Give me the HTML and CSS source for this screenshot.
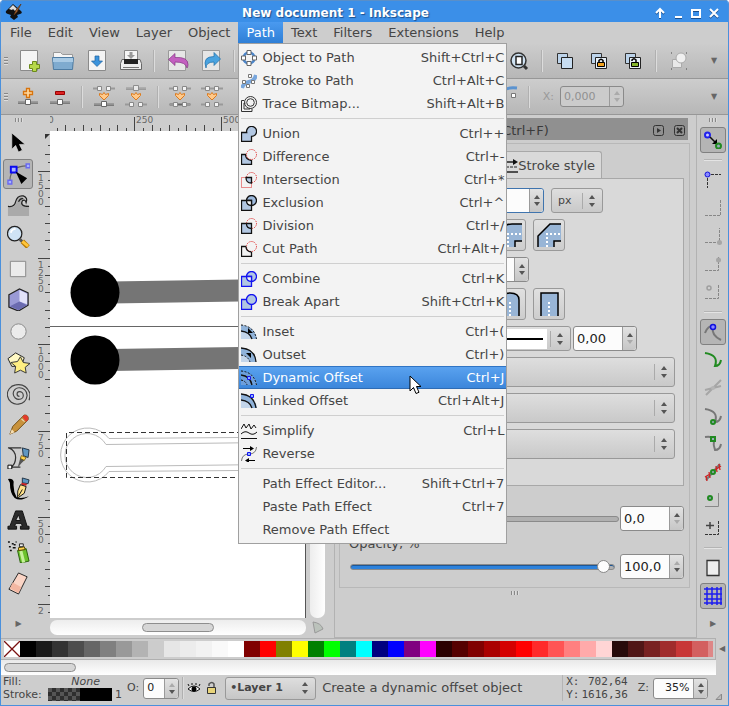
FILE: index.html
```html
<!DOCTYPE html>
<html lang="en">

<head>
    <meta charset="UTF-8">
    <meta name="viewport" content="width=device-width, initial-scale=1">
    <title>New document 1 - Inkscape</title>
    <link rel="stylesheet" href="styles.css">
</head>

<body>
    <div class="window">
        <header class="titlebar">
            <svg class="app-logo" width="18" height="18" viewBox="0 0 18 18">
                <path d="M8 1L1 8q-1 2 2 3l3 1-1 2 4 3 4-3-1-2 3-1q3-1 1-3z" fill="#111" />
                <path d="M8 2L4 6l3 1 1-1 2 2 2-2z" fill="#ddd" />
                <path d="M16 1l-5 6-2 5 3-3z" fill="#a9693a" stroke="#5d300f" stroke-width=".7" />
            </svg>
            <h1 class="title">New document 1 - Inkscape</h1>
            <div class="window-buttons">
                <button class="win-btn" aria-label="Roll up"><svg width="12" height="12" viewBox="0 0 12 12"><path d="M6 11V3M2 6l4-4 4 4" /></svg></button>
                <button class="win-btn" aria-label="Minimize"><svg width="12" height="12" viewBox="0 0 12 12"><path d="M3 10h7" /></svg></button>
                <button class="win-btn" aria-label="Maximize"><svg width="12" height="12" viewBox="0 0 12 12"><path d="M2 3h8v7H2z" /></svg></button>
                <button class="win-btn" aria-label="Close"><svg width="12" height="12" viewBox="0 0 12 12"><path d="M2 2l8 8M10 2l-8 8" /></svg></button>
            </div>
        </header>

        <nav class="menubar">
            <button class="menu-title">File</button>
            <button class="menu-title">Edit</button>
            <button class="menu-title">View</button>
            <button class="menu-title">Layer</button>
            <button class="menu-title">Object</button>
            <div class="menu-open">
                <button class="menu-title active" aria-expanded="true">Path</button>
                <div class="menu">
                    <button class="item">
                        <svg class="icon" viewBox="0 0 16 16"><circle cx="8" cy="8" r="5.5" fill="none" stroke="#4a86cc" stroke-width="2.5" /><g fill="#fff" stroke="#666"><path d="M6 .5h4v4H6zM6 11.500h4v4H6zM.5 6h4v4h-4zM11.500 6h4v4h-4z" /></g></svg>
                        <span>Object to Path</span><kbd>Shift+Ctrl+C</kbd></button>
                    <button class="item">
                        <svg class="icon" viewBox="0 0 16 16"><path d="M1 15C4 5 12 13 15 2" fill="none" stroke="#78a6dc" stroke-width="4" /><g fill="#fff" stroke="#777"><path d="M7.500 1.500h3v3h-3zM1.500 7.500h3v3h-3zM10.500 7.500h3v3h-3zM5.500 11.500h3v3h-3z" /></g></svg>
                        <span>Stroke to Path</span><kbd>Ctrl+Alt+C</kbd></button>
                    <button class="item">
                        <svg class="icon" viewBox="0 0 16 16" fill="none" stroke="#333"><circle cx="9.500" cy="6.500" r="6" /><circle cx="9.500" cy="6.500" r="3.800" /><path d="M3 4.500H.5v11H11v-2.500M4.500 7H3v6h6v-1" /></svg>
                        <span>Trace Bitmap...</span><kbd>Shift+Alt+B</kbd></button>
                    <hr>
                    <button class="item">
                        <svg class="icon" viewBox="0 0 16 16"><path d="M.5 6.500h5.200A5 5 0 1 1 10.500 10.400V15.500H.5z" fill="#b2c7e2" stroke="#111" stroke-width="1.300" /></svg>
                        <span>Union</span><kbd>Ctrl++</kbd></button>
                    <button class="item">
                        <svg class="icon" viewBox="0 0 16 16"><path d="M.5 5.500h4q0 5 6 6v4H.5z" fill="#b2c7e2" stroke="#111" stroke-width="1.300" /><circle cx="10.500" cy="5.500" r="5" class="cut-line" /></svg>
                        <span>Difference</span><kbd>Ctrl+-</kbd></button>
                    <button class="item">
                        <svg class="icon" viewBox="0 0 16 16"><path d="M.5 5.500h10v10H.5z" class="cut-line" /><circle cx="10.500" cy="5.500" r="5" class="cut-line" /><path d="M5 5.500h5.500v5.500Q5 11 5 5.500z" fill="#b2c7e2" stroke="#111" stroke-width="1.300" /></svg>
                        <span>Intersection</span><kbd>Ctrl+*</kbd></button>
                    <button class="item">
                        <svg class="icon" viewBox="0 0 16 16" stroke="#111" stroke-width="1.300"><circle cx="10.500" cy="5.500" r="5" fill="#9db9dc" /><path d="M.5 5.500h10v10H.5z" fill="#b2c7e2" /><path d="M5.500 5.500h5v5q-5 0-5-5z" fill="#f3f3f3" /></svg>
                        <span>Exclusion</span><kbd>Ctrl+^</kbd></button>
                    <button class="item">
                        <svg class="icon" viewBox="0 0 16 16"><circle cx="10.500" cy="5.500" r="5" class="cut-line" /><g fill="#b2c7e2" stroke="#111" stroke-width="1.300"><path d="M.5 5.500h10v10H.5z" /><path d="M5.500 5.500q0 5 5 5" /></g></svg>
                        <span>Division</span><kbd>Ctrl+/</kbd></button>
                    <button class="item">
                        <svg class="icon" viewBox="0 0 16 16"><circle cx="10.500" cy="5.500" r="5" class="cut-line" /><path d="M5 5.500H.5v10h10v-4.500M5 5.500q0 5 5.500 5.500" fill="none" stroke="#111" stroke-width="1.300" /></svg>
                        <span>Cut Path</span><kbd>Ctrl+Alt+/</kbd></button>
                    <hr>
                    <button class="item">
                        <svg class="icon" viewBox="0 0 16 16" stroke="#1414f0" stroke-width="1.300"><circle cx="10.500" cy="5.500" r="5" fill="#b2c7e2" /><path d="M.5 5.500h10v10H.5z" fill="#b2c7e2" /><path d="M5.500 5.500h5v5q-5 0-5-5z" fill="#f3f3f3" /></svg>
                        <span>Combine</span><kbd>Ctrl+K</kbd></button>
                    <button class="item">
                        <svg class="icon" viewBox="0 0 16 16" fill="#b2c7e2" stroke="#1414f0" stroke-width="1.300"><path d="M.5 5.500h10v10H.5z" /><circle cx="10.500" cy="5.500" r="5" /></svg>
                        <span>Break Apart</span><kbd>Shift+Ctrl+K</kbd></button>
                    <hr>
                    <button class="item">
                        <svg class="icon" viewBox="0 0 16 16"><path d="M0 1q14 1 16 14H9Q8 8 0 7z" fill="#8fb2d9" /><path d="M0 7q9 1 11 8H0z" fill="#c3d5ea" /><path d="M0 1q13 1 15.500 14" fill="none" stroke="#111" stroke-dasharray="2 1.500" /><path d="M0 7q9 1 11 8" fill="none" stroke="#111" stroke-width="1.300" /><path d="M7 4v5h5z" /></svg>
                        <span>Inset</span><kbd>Ctrl+(</kbd></button>
                    <button class="item">
                        <svg class="icon" viewBox="0 0 16 16"><path d="M0 1q14 1 15 14H0z" fill="#8fb2d9" /><path d="M0 8q7 1 9 7H0z" fill="#c3d5ea" /><path d="M0 1q14 1 15 14" fill="none" stroke="#111" stroke-width="1.300" /><path d="M0 8q7 1 9 7" fill="none" stroke="#111" stroke-dasharray="2 1.500" /><path d="M10 6v5L5 6z" /></svg>
                        <span>Outset</span><kbd>Ctrl+)</kbd></button>
                    <button class="item selected">
                        <svg class="icon" viewBox="0 0 16 16"><path d="M0 1q14 1 16 14H0z" fill="#6d9fdb" /><g fill="none" stroke="#111"><path d="M0 1q13 1 15.500 14M0 10q5 1 6 5" stroke-dasharray="2 1.500" /><path d="M0 5q9 1 11 10" stroke-width="1.300" /></g><path d="M6.500 6.500h3v3h-3z" fill="#8fb2ff" stroke="#1414f0" /></svg>
                        <span>Dynamic Offset</span><kbd>Ctrl+J</kbd>
                        <svg class="pointer" width="13" height="20" viewBox="0 0 13 20"><path d="M1 1v15l3.500-3.500 2.500 6 3-1.200-2.500-5.800H12z" fill="#fff" stroke="#000" /></svg>
                    </button>
                    <button class="item">
                        <svg class="icon" viewBox="0 0 16 16"><path d="M0 1q14 1 16 14H0z" fill="#8fb2d9" /><path d="M0 7q9 1 11 8H0z" fill="#c3d5ea" /><path d="M0 1q13 1 15 14M0 7q9 1 11 8" fill="none" stroke="#111" stroke-width="1.300" /><path d="M9.500 1.500h3v3h-3z" fill="#8fb2ff" stroke="#1414f0" /></svg>
                        <span>Linked Offset</span><kbd>Ctrl+Alt+J</kbd></button>
                    <hr>
                    <button class="item">
                        <svg class="icon" viewBox="0 0 16 16" fill="none" stroke="#111"><path d="M0 6l3-5 2 4 3-4 2 5 3-4 2 3M0 11q4-4 8-1t8-1M0 15.500h16" /></svg>
                        <span>Simplify</span><kbd>Ctrl+L</kbd></button>
                    <button class="item">
                        <svg class="icon" viewBox="0 0 16 16"><path d="M.5 15Q1 8 8 8t7.500-7" fill="none" stroke="#777" /><path d="M2 2.500h8M6 14.500h8" stroke="#000" /><path d="M9 0l4 2.500L9 5zM8 12l-4 2.500L8 17z" /><path d="M6.500 6.500h3v3h-3z" fill="#8fb2ff" stroke="#1414f0" /></svg>
                        <span>Reverse</span></button>
                    <hr>
                    <button class="item"><i class="icon"></i><span>Path Effect Editor...</span><kbd>Shift+Ctrl+7</kbd></button>
                    <button class="item"><i class="icon"></i><span>Paste Path Effect</span><kbd>Ctrl+7</kbd></button>
                    <button class="item"><i class="icon"></i><span>Remove Path Effect</span></button>
                </div>
            </div>
            <button class="menu-title">Text</button>
            <button class="menu-title">Filters</button>
            <button class="menu-title">Extensions</button>
            <button class="menu-title">Help</button>
        </nav>

        <div class="toolbar commands">
            <i class="grip"></i>
            <button class="tool" aria-label="New"><svg width="24" height="24" viewBox="0 0 24 24"><path d="M3.500 1.500h17v20h-17z" fill="#f4f4f4" stroke="#8a8a8a" /><path d="M15.500 12.500h4v3h3v4h-3v3h-4v-3h-3v-4h3z" fill="#b7d84b" stroke="#6c8a1c" /></svg></button>
            <button class="tool" aria-label="Open"><svg width="24" height="24" viewBox="0 0 24 24"><path d="M2.500 19V3.500h7l2 2h10V19z" fill="#f5f5f5" stroke="#999" /><path d="M1.500 8.500h21l-1 12h-19z" fill="#7fabcf" stroke="#4e7ca3" /><path d="M2 9h20v4H2z" fill="#a9cae4" /></svg></button>
            <button class="tool" aria-label="Save"><svg width="24" height="24" viewBox="0 0 24 24"><path d="M3.500 1.500h17v20h-17z" fill="#f4f4f4" stroke="#8a8a8a" /><path d="M10 7h4v5h3.500L12 17.500 6.500 12H10z" fill="#3b93dc" stroke="#20639f" stroke-width=".7" /></svg></button>
            <button class="tool" aria-label="Print"><svg width="24" height="24" viewBox="0 0 24 24"><path d="M5.500 1.500h13v10h-13z" fill="#f4f4f4" stroke="#888" /><path d="M10.500 3h3v3h2.500l-4 4-4-4h2.500z" fill="#999" /><path d="M3 10.500h18l1.500 4v6h-21v-6z" fill="#ececec" stroke="#666" /><path d="M5 10h14v5H5z" fill="#222" /><path d="M4 18.500h16" stroke="#777" /></svg></button>
            <i class="sep"></i>
            <button class="tool" aria-label="Undo"><svg width="24" height="24" viewBox="0 0 24 24"><path d="M3.500 1.500h17v20h-17z" fill="#e6e6e6" stroke="#999" /><path d="M10 4.500v4q13-1 13 7 0 2-1 3.500-1-6-12-6v3.500L3.500 10.500z" fill="#c35fc0" stroke="#833781" stroke-width=".7" /></svg></button>
            <button class="tool" aria-label="Redo"><svg width="24" height="24" viewBox="0 0 24 24"><path d="M3.500 1.500h17v20h-17z" fill="#e6e6e6" stroke="#999" /><path d="M15 3.500v4q-12 0-8 11.500 0-6 8-6v3.500l6.500-6.500z" fill="#4aa3df" stroke="#1e6da8" stroke-width=".7" /></svg></button>
            <i class="sep"></i>
            <i class="spacer"></i>
            <button class="tool" aria-label="Zoom page"><svg width="20" height="20" viewBox="0 0 20 20"><circle cx="9.500" cy="9.500" r="7.500" fill="#cfe2f2" stroke="#333" stroke-width="1.500" /><path d="M7 5.500h6v8H7z" fill="#fff" stroke="#222" stroke-width="1.500" /><path d="M15 15l3 3" stroke="#333" stroke-width="3" /></svg></button>
            <i class="sep"></i>
            <button class="tool" aria-label="Duplicate"><svg width="20" height="20" viewBox="0 0 20 20"><path d="M2.500 2.500h10v10h-10z" fill="#bcd3ea" stroke="#333" /><path d="M6.500 6.500h11v11h-11z" fill="#c7dcf0" stroke="#222" /></svg></button>
            <button class="tool" aria-label="Clone"><svg width="20" height="20" viewBox="0 0 20 20"><path d="M2.500 2.500h10v10h-10z" fill="#bcd3ea" stroke="#333" /><path d="M6.500 6.500h11v11h-11z" fill="#e8f0f8" stroke="#222" /><path d="M10 11V9.500q2-2.500 4 0V11" fill="none" stroke="#000" stroke-width="1.500" /><path d="M8.500 11.500h7v4h-7z" fill="#f2a21e" stroke="#000" /></svg></button>
            <button class="tool" aria-label="Unlink clone"><svg width="20" height="20" viewBox="0 0 20 20"><path d="M2.500 2.500h10v10h-10z" fill="#bcd3ea" stroke="#333" /><path d="M6.500 6.500h11v11h-11z" fill="#e8f0f8" stroke="#222" /><path d="M9 10V9q2-2.500 4 0v2" fill="none" stroke="#000" stroke-width="1.500" /><path d="M8.500 11.500h7v4h-7z" fill="#86b52c" stroke="#000" /></svg></button>
            <i class="sep"></i>
            <button class="tool" aria-label="Group"><svg width="20" height="20" viewBox="0 0 20 20"><path d="M3.500 8.500h9v8h-9z" fill="#e8e8e8" stroke="#aaa" /><circle cx="12" cy="7" r="5" fill="#f0f0f0" stroke="#aaa" /><path d="M2 2h1M17 2h1M2 18h1M17 18h1" stroke="#444" /></svg></button>
            <button class="more">▼</button>
        </div>

        <div class="toolbar node-bar">
            <i class="grip"></i>
            <button class="tool" aria-label="Insert node"><svg width="24" height="24" viewBox="0 0 24 24"><use href="#rail" /><path d="M10.500 3.500h3v3h3v3h-3v3h-3v-3h-3v-3h3z" fill="#ffd9a0" stroke="#d8730c" stroke-width="1.300" /></svg></button>
            <button class="tool" aria-label="Delete node"><svg width="24" height="24" viewBox="0 0 24 24"><use href="#rail" /><path d="M7.500 6.500h9v3h-9z" fill="#d22" stroke="#900" /></svg></button>
            <i class="sep"></i>
            <button class="tool" aria-label="Join nodes"><svg width="24" height="24" viewBox="0 0 24 24"><use href="#pair-top" /><use href="#drop" /><use href="#rail" transform="translate(0 2)" /></svg></button>
            <button class="tool" aria-label="Break path"><svg width="24" height="24" viewBox="0 0 24 24"><use href="#rail" opacity=".6" transform="translate(0 -14)" /><use href="#drop" /><use href="#pair-top" transform="translate(0 16)" /></svg></button>
            <i class="sep"></i>
            <button class="tool" aria-label="Join with segment"><svg width="24" height="24" viewBox="0 0 24 24"><use href="#pair-top" /><use href="#drop" /><path d="M2 19.500h20" stroke="#666" stroke-width="2" /><use href="#pair-top" transform="translate(0 16)" /></svg></button>
            <button class="tool" aria-label="Delete segment"><svg width="24" height="24" viewBox="0 0 24 24"><path d="M5 3.500h14" stroke="#999" stroke-width="2" /><use href="#pair-top" /><use href="#drop" /><use href="#pair-top" transform="translate(0 16)" /></svg></button>
            <i class="spacer"></i>
            <button class="tool" aria-label="Show handles"><svg width="24" height="24" viewBox="0 0 24 24"><path d="M2 14Q6 1 22 3" fill="none" stroke="#5b93d0" stroke-width="3" /><path d="M16.500 8.500h4v4h-4z" fill="#fff" stroke="#777" /></svg></button>
            <i class="sep"></i>
            <label class="coord-label" for="node-x">X:</label>
            <div class="spin small disabled coord">
                <input id="node-x" value="0,000" disabled>
                <div class="steps"><button aria-label="Increase X"></button><button aria-label="Decrease X"></button></div>
            </div>
            <button class="more">▼</button>
        </div>

        <main class="work">
            <aside class="toolbox">
                <i class="grip-h"></i>
                <div class="tools">
                    <button aria-label="Selector"><svg viewBox="0 0 24 24"><path d="M5 2v17l4-4 3 7 4-2-3-6h6z" stroke="#ddd" stroke-width=".7" /></svg></button>
                    <button class="pressed" aria-label="Node tool"><svg viewBox="0 0 24 24"><path d="M3 20Q3 4 21 4" fill="none" stroke="#666" stroke-width="1.300" /><g fill="#aab4ff" stroke="#6a6af0" stroke-width="1.500"><path d="M1 19h4v4H1zM20 2h4v4h-4z" /><path d="M4 5h6v6H4z" stroke="#0a0af0" stroke-width="2" /></g><path d="M9 10l6 13 6-6z" /></svg></button>
                    <button aria-label="Tweak"><svg viewBox="0 0 24 24"><path d="M1 23V13q8 2 9-5 2-6 7-5-4 5-2 8 2 3 8 2v10z" fill="#aaa" /><path d="M1 13q7 1 8-5 2-7 8-6 5 2 3 7-1-4-4-2-3 6 7 6M12 8q2-4 5-3" fill="none" stroke="#222" stroke-width="1.300" /></svg></button>
                    <button aria-label="Zoom"><svg viewBox="0 0 24 24"><circle cx="8" cy="9" r="7.500" fill="#cfe3f5" stroke="#222" stroke-width="1.300" /><path d="M4 8q1-4 5-4" fill="none" stroke="#fff" stroke-width="2" /><path d="M13.500 15l3 3" stroke="#555" stroke-width="3" /><path d="M16 17l6 6" stroke="#b87800" stroke-width="5" /><path d="M16 17l6 5" stroke="#ffc53a" stroke-width="3" /></svg></button>
                    <button aria-label="Rectangle"><svg viewBox="0 0 24 24"><path d="M3.500 4.500h16v16h-16z" fill="#ebebeb" stroke="#888" /></svg></button>
                    <button aria-label="3D box"><svg viewBox="0 0 24 24"><path d="M2 7l11-6 9 4v13l-10 6-10-4z" fill="#9a9ad6" stroke="#222" stroke-width="1.300" /><path d="M13 2l8 4v11l-8-3z" fill="#e2e2fa" /><path d="M13 14l8 4-9 5-9-4z" fill="#6b6bb0" /></svg></button>
                    <button aria-label="Ellipse"><svg viewBox="0 0 24 24"><circle cx="12" cy="12" r="8" fill="#ebebeb" stroke="#888" /></svg></button>
                    <button aria-label="Star"><svg viewBox="0 0 24 24"><path d="M9 2l9 5-3 9H5L1 8z" fill="#fff9c4" stroke="#222" /><path d="M14 6l3 6 7 1-5 4 1 6-6-3-6 3 1-7-5-4 7-1z" fill="#ffef82" stroke="#333" /></svg></button>
                    <button aria-label="Spiral"><svg viewBox="0 0 24 24"><path d="M13 14a2 2 0 0 1 0-5a4 4 0 0 1 0 8a6 6 0 0 1-1-12a8 8 0 0 1 9 8q-1 8-9 9a10 10 0 0 1-3-20q11-2 15 9 0 5-1 7" fill="none" stroke="#444" stroke-width="1.200" /></svg></button>
                    <button aria-label="Pencil"><svg viewBox="0 0 24 24"><path d="M3 21l3-8L18 1q5 0 4 5L10 18z" fill="#c8923c" stroke="#6e4a12" /><path d="M16 3l2-2q5 0 4 5l-2 2z" fill="#e33a2c" /><path d="M3 21l2-5 3 3z" fill="#f6dfb5" /><path d="M15 5l3 3" stroke="#fff" /></svg></button>
                    <button aria-label="Bezier"><svg viewBox="0 0 24 24"><path d="M1 2h14M2 2q7 3 7 10T4 22h10" fill="none" stroke="#333" stroke-width="1.300" /><path d="M1 20h4v4H1z" fill="#fff" stroke="#000" /><path d="M16 2l7 2-1 8-5-2z" fill="#5f97c2" stroke="#234" /><path d="M14 12l5 2-4 4-4 5z" fill="#555" /><path d="M15 10l5 2-2 3-4-2z" fill="#ffd24d" stroke="#540" stroke-width=".7" /></svg></button>
                    <button aria-label="Calligraphy"><svg viewBox="0 0 24 24"><path d="M1 2q5-1 6 3-1 9 3 16 5 2 13-1-9 6-15 2Q3 17 3 6z" /><path d="M16 1l7 2-1 4-6-1z" fill="#5f97c2" stroke="#234" /><path d="M15 6l6 1-1 2-5-1z" fill="#c22" /><path d="M14 8l6 2-2 7-7 5q-1-8 3-14z" fill="#ffe28a" stroke="#111" /><path d="M12 20l4-7" stroke="#111" /></svg></button>
                    <button aria-label="Text tool"><svg viewBox="0 0 24 24"><path d="M1 21v-3h2L9 2h7l5 16h2v3h-9v-3h2l-1-3h-6l-1 3h2v3zm8-9h5l-2-6z" fill="#2b2b2b" stroke="#111" fill-rule="evenodd" /></svg></button>
                    <button aria-label="Spray"><svg viewBox="0 0 24 24"><path d="M11 11l9-2 3 13-9 2z" fill="#6cc22e" stroke="#28600a" /><path d="M13 12l3-1 3 12-3 1z" fill="#c5f09a" /><path d="M12 8l6-1 1 3-7 1z" fill="#ffd24d" stroke="#540" /><path d="M13 4h4v3h-4z" fill="#eee" stroke="#222" /><path d="M1 2h2M5 4h2M9 2h1M2 7h2M6 8h3M3 11h2M7 5h2" stroke="#111" stroke-width="1.500" /></svg></button>
                    <button aria-label="Eraser"><svg viewBox="0 0 24 24"><path d="M12 1l9 4-9 18-10-5z" fill="#fbd5c6" stroke="#222" /><path d="M6 11l9 5-3 6-9-5z" fill="#f3b7a2" /></svg></button>
                </div>
                <button class="expander">▶</button>
            </aside>

            <section class="canvas-area">
                <svg class="ruler-top">
                    <g class="ticks">
                        <path d="M84 2v14M171 2v14" />
                        <path d="M15 10v6M33 10v6M50 10v6M67 10v6M102 10v6M119 10v6M136 10v6M154 10v6" />
                        <path d="M7 13v3M24 13v3M41 13v3M59 13v3M76 13v3M93 13v3M110 13v3M128 13v3M145 13v3M163 13v3M180 13v3" />
                    </g>
                    <text x="-2" y="8">0</text>
                    <text x="86" y="8">250</text>
                    <text x="173" y="8">500</text>
                </svg>
                <svg class="ruler-left">
                    <path d="M7 3h5l-5 5z" fill="#333" />
                    <g class="ticks">
                        <path d="M0 40h12M0 127h12M0 213h12M0 300h12M0 386h12M0 473h12" />
                        <path d="M7 23h5M7 57h5M7 75h5M7 92h5M7 109h5M7 144h5M7 161h5M7 179h5M7 196h5M7 230h5M7 248h5M7 265h5M7 282h5M7 317h5M7 334h5M7 352h5M7 369h5M7 403h5M7 421h5M7 438h5M7 455h5" />
                        <path d="M10 14h2M10 31h2M10 49h2M10 66h2M10 83h2M10 101h2M10 118h2M10 135h2M10 153h2M10 170h2M10 187h2M10 205h2M10 222h2M10 239h2M10 256h2M10 274h2M10 291h2M10 308h2M10 326h2M10 343h2M10 360h2M10 378h2M10 395h2M10 412h2M10 430h2M10 447h2M10 464h2M10 481h2" />
                    </g>
                    <text><tspan x="0" y="50">1</tspan><tspan x="0" y="58">5</tspan><tspan x="0" y="66">0</tspan><tspan x="0" y="74">0</tspan></text>
                    <text><tspan x="0" y="137">1</tspan><tspan x="0" y="145">2</tspan><tspan x="0" y="153">5</tspan><tspan x="0" y="161">0</tspan></text>
                    <text><tspan x="0" y="223">1</tspan><tspan x="0" y="231">0</tspan><tspan x="0" y="239">0</tspan><tspan x="0" y="247">0</tspan></text>
                    <text><tspan x="0" y="310">7</tspan><tspan x="0" y="318">5</tspan><tspan x="0" y="326">0</tspan></text>
                    <text><tspan x="0" y="396">5</tspan><tspan x="0" y="404">0</tspan><tspan x="0" y="412">0</tspan></text>
                    <text><tspan x="0" y="483">2</tspan></text>
                </svg>
                <svg class="canvas">
                    <path d="M0 195.500h260" stroke="#666" />
                    <path d="M60 150.500l196-3v22l-196 3z" fill="#757575" />
                    <circle cx="45" cy="161.500" r="24.500" />
                    <path d="M60 218l196-3v22l-196 3z" fill="#757575" />
                    <circle cx="45" cy="229" r="24.500" />
                    <g fill="none" stroke="#bbb">
                        <path d="M256 306L59 307.500a27 27 0 1 0 0 33L256 339" />
                        <path d="M256 311L56 313.500a22 22 0 1 0 0 22L256 333" />
                    </g>
                    <path d="M256 301.500H16.500v45H256" fill="none" stroke="#333" stroke-dasharray="5 3" />
                </svg>
                <div class="scroll vertical"></div>
                <div class="scroll horizontal"><i class="thumb"></i></div>
                <svg class="cms" width="12" height="14" viewBox="0 0 12 14"><path d="M1 1q8 1 10 7l-8 4z" fill="#bbc2bb" stroke="#999" /></svg>
            </section>

            <section class="dock">
                <header class="dock-head">
                    <h2>Fill and Stroke (Shift+Ctrl+F)</h2>
                    <button aria-label="Iconify"><svg width="11" height="11" viewBox="0 0 11 11"><rect x=".5" y=".5" width="10" height="10" rx="2" fill="none" stroke="#333" /><path d="M4 3l4 2.500L4 8z" fill="#333" /></svg></button>
                    <button aria-label="Close dialog"><svg width="11" height="11" viewBox="0 0 11 11"><rect x=".5" y=".5" width="10" height="10" rx="2" fill="none" stroke="#333" /><path d="M3 3l5 5M8 3l-5 5" stroke="#333" stroke-width="2" /></svg></button>
                </header>
                <div class="dock-body">
                    <div class="tabs">
                        <button class="tab">
                            <svg width="12" height="14" viewBox="0 0 12 14"><path d="M0 3h8M0 13h12" stroke="#222" stroke-width="1.500" /><path d="M7 0l5 3-5 3z" fill="#111" /><path d="M0 8h12" stroke="#222" stroke-dasharray="3 1" /></svg>
                            Stroke style</button>
                    </div>
                    <div class="page">
                        <div class="row">
                            <label for="width">Width:</label>
                            <div class="spin focused width"><input id="width" value="1,000">
                                <div class="steps"><button aria-label="Increase width"></button><button aria-label="Decrease width"></button></div>
                            </div>
                            <select class="unit" aria-label="Unit"><option>px</option></select>
                        </div>
                        <div class="row">
                            <span>Join:</span>
                            <button class="shape" aria-label="Miter join"><svg viewBox="0 0 24 24"><path d="M0 0h24v18h-6v6H0z" fill="#98b5d6" /></svg></button>
                            <button class="shape" aria-label="Round join"><svg viewBox="0 0 24 24"><path d="M1 24V14Q2 1 14 1h10v17h-7v6z" fill="#98b5d6" /><path d="M1 24V14Q2 1 14 1h10M24 18h-7v6" fill="none" stroke="#000" stroke-width="1.500" /><path d="M10 24V11h14" class="dots" /></svg></button>
                            <button class="shape" aria-label="Bevel join"><svg viewBox="0 0 24 24"><path d="M1 24V13L13 1h11v17h-7v6z" fill="#98b5d6" /><path d="M1 24V13L13 1h11M24 18h-7v6" fill="none" stroke="#000" stroke-width="1.500" /><path d="M10 24V11h14" class="dots" /></svg></button>
                        </div>
                        <div class="row">
                            <label for="miter">Miter limit:</label>
                            <div class="spin miter"><input id="miter" value="4,00">
                                <div class="steps"><button aria-label="Increase limit"></button><button aria-label="Decrease limit"></button></div>
                            </div>
                        </div>
                        <div class="row">
                            <span>Cap:</span>
                            <button class="shape" aria-label="Butt cap"><svg viewBox="0 0 24 24"><path d="M4 12h16v12H4z" fill="#98b5d6" /></svg></button>
                            <button class="shape" aria-label="Round cap"><svg viewBox="0 0 24 24"><path d="M3 24V8q0-7 9-7t9 7v16" fill="#98b5d6" stroke="#000" stroke-width="1.500" /><path d="M12 10v14" class="dots" /></svg></button>
                            <button class="shape" aria-label="Square cap"><svg viewBox="0 0 24 24"><path d="M4 24V1h17v23" fill="#98b5d6" stroke="#000" stroke-width="1.500" /><path d="M12 10v14" class="dots" /></svg></button>
                        </div>
                        <div class="row dashes">
                            <label for="dash">Dashes:</label>
                            <select id="dash" class="dash"><option></option></select>
                            <div class="spin top-only offset"><input value="0,00" aria-label="Dash offset">
                                <div class="steps"><button aria-label="Increase offset"></button><button aria-label="Decrease offset"></button></div>
                            </div>
                        </div>
                        <div class="row"><label for="m1">Start:</label><select id="m1" class="marker"><option></option></select></div>
                        <div class="row"><label for="m2">Mid:</label><select id="m2" class="marker"><option></option></select></div>
                        <div class="row"><label for="m3">End:</label><select id="m3" class="marker"><option></option></select></div>
                    </div>
                    <div class="slider-row blur">
                        <input type="range" class="slider empty" value="0" aria-label="Blur">
                        <div class="spin top-only level"><input value="0,0" aria-label="Blur value">
                            <div class="steps"><button aria-label="Increase blur"></button><button aria-label="Decrease blur"></button></div>
                        </div>
                    </div>
                    <label class="opacity-label" for="opacity">Opacity, %</label>
                    <div class="slider-row">
                        <input type="range" id="opacity" class="slider" value="100">
                        <div class="spin bottom-only level"><input value="100,0" aria-label="Opacity value">
                            <div class="steps"><button aria-label="Increase opacity"></button><button aria-label="Decrease opacity"></button></div>
                        </div>
                    </div>
                </div>
                <i class="grip-h"></i>
            </section>

            <aside class="snapbar">
                <i class="grip-h"></i>
                <button class="snap pressed" aria-label="Enable snapping"><svg viewBox="0 0 18 18"><circle cx="3.500" cy="4" r="2.500" class="blue" /><path d="M6 6l5 5" stroke="#111" stroke-width="1.500" /><path d="M13 13V8l-5 5z" /><circle cx="14.500" cy="15" r="2.500" class="green" /></svg></button>
                <hr>
                <button class="snap" aria-label="Snap bounding box"><svg viewBox="0 0 18 18"><path d="M3 3.500h14M3.500 3v14" class="dash-line" /><circle cx="3.500" cy="3.500" r="2.500" fill="#88f" stroke="#11d" /></svg></button>
                <button class="snap off" aria-label="Snap edges"><svg viewBox="0 0 18 18"><path d="M1 16.500h15.500V1" class="dash-line" /></svg></button>
                <button class="snap off" aria-label="Snap corners"><svg viewBox="0 0 18 18"><path d="M1 15.500h14.500V1" class="dash-line" /><circle cx="15.500" cy="15.500" r="2.500" fill="#777" /></svg></button>
                <button class="snap off" aria-label="Snap edge midpoints"><svg viewBox="0 0 18 18"><path d="M1 15.500h13.500V1" class="dash-line" /><circle cx="14.500" cy="5" r="2.500" fill="#777" /></svg></button>
                <button class="snap off" aria-label="Snap centers"><svg viewBox="0 0 18 18"><path d="M1 15.500h13.500V1" class="dash-line" /><circle cx="5" cy="5" r="2" fill="none" stroke="#666" stroke-width="1.500" /></svg></button>
                <hr>
                <button class="snap pressed" aria-label="Snap nodes"><svg viewBox="0 0 18 18"><path d="M1 10Q4 2 9 4q-2 8 8 13" class="curve" /><circle cx="9" cy="4" r="2.500" fill="#88f" stroke="#11d" stroke-width="1.500" /></svg></button>
                <button class="snap" aria-label="Snap to paths"><svg viewBox="0 0 18 18"><path d="M1 2q14 2 10 13 5 0 6-6" fill="none" stroke="#218a21" stroke-width="2" /></svg></button>
                <button class="snap off" aria-label="Snap intersections"><svg viewBox="0 0 18 18"><path d="M1 11l16-4M2 16L17 1" class="curve" /><circle cx="9" cy="9" r="2" fill="#999" /></svg></button>
                <button class="snap" aria-label="Snap cusp nodes"><svg viewBox="0 0 18 18"><path d="M1 2q14 2 10 13 5 0 6-6" class="curve" /><circle cx="9" cy="15" r="2" class="green" /></svg></button>
                <button class="snap" aria-label="Snap smooth nodes"><svg viewBox="0 0 18 18"><path d="M1 2q9-1 9 3-1 5 1 10 5 0 6-6" class="curve" /><path d="M7 2h4v4H7z" class="green" /></svg></button>
                <button class="snap" aria-label="Snap line midpoints"><svg viewBox="0 0 18 18"><path d="M2 17L16 1" class="curve" /><path d="M2 13l1 5M5 9l1 6M1 14l5-3M12 3l1 6M15 1l1 6M11 7l6-4" stroke="#c22" stroke-width="1.300" /><circle cx="9" cy="9" r="2" class="green" /></svg></button>
                <button class="snap" aria-label="Snap object centers"><svg viewBox="0 0 18 18"><path d="M1 15.500h13.500V2" fill="none" stroke="#888" /><circle cx="6" cy="7" r="2" class="green" /></svg></button>
                <button class="snap" aria-label="Snap rotation centers"><svg viewBox="0 0 18 18"><path d="M6 3v7M2 6.500h8" stroke="#444" stroke-width="1.500" /><path d="M1 15.500h13.500V1" class="dash-line" /></svg></button>
                <hr>
                <button class="snap" aria-label="Snap page border"><svg viewBox="0 0 18 18"><path d="M3 1.500h12v15H3z" fill="#eee" stroke="#333" stroke-width="1.300" /></svg></button>
                <button class="snap pressed" aria-label="Snap grid"><svg viewBox="0 0 18 18"><path d="M3 0v18M8 0v18M13 0v18M17 0v18M0 2h18M0 7h18M0 12h18M0 16h18" stroke="#1c1cf0" stroke-width="1.500" /></svg></button>
                <button class="expander">▶</button>
            </aside>
        </main>

        <div class="palette-row">
            <div class="palette" id="palette">
                <svg class="swatch" viewBox="0 0 16 16"><path d="M0 0h16v16H0z" fill="#fff" /><path d="M0 0l16 16M16 0L0 16" stroke="#7a1010" stroke-width="1.300" /></svg>
            </div>
            <button class="expander">◀</button>
        </div>
        <div class="palette-scroll"><i class="thumb"></i></div>

        <footer class="statusbar">
            <div class="paint">
                <span>Fill:</span><em>None</em><span></span>
                <span>Stroke:</span><span class="stroke-swatch"></span><span>1</span>
            </div>
            <label class="o-label" for="master">O:</label>
            <div class="spin small bottom-only master"><input id="master" value="0">
                <div class="steps"><button aria-label="Increase opacity"></button><button aria-label="Decrease opacity"></button></div>
            </div>
            <i class="sep"></i>
            <button class="layer-btn" aria-label="Toggle visibility"><svg width="14" height="12" viewBox="0 0 14 12"><path d="M1 7q6-6 12 0-6 5-12 0z" fill="#fff" stroke="#111" /><circle cx="7" cy="7" r="2.500" /><path d="M2 4l-1-2M5 3V1M9 3V1M12 4l1-2" stroke="#111" /></svg></button>
            <button class="layer-btn" aria-label="Toggle lock"><svg width="12" height="14" viewBox="0 0 12 14"><path d="M3 5V3q3-3 5 0v4" fill="none" stroke="#555" stroke-width="1.500" /><path d="M1.500 6.500h8v6h-8z" fill="#e8d47a" stroke="#333" /></svg></button>
            <select class="layer" aria-label="Layer"><option>•Layer 1</option></select>
            <p class="hint">Create a dynamic offset object</p>
            <dl class="coords">
                <dt>X:</dt><dd>702,64</dd>
                <dt>Y:</dt><dd>1616,36</dd>
            </dl>
            <label class="z-label" for="zoom">Z:</label>
            <div class="spin small zoom"><input id="zoom" value="35%">
                <div class="steps"><button aria-label="Zoom in"></button><button aria-label="Zoom out"></button></div>
            </div>
            <svg class="resize" width="8" height="8" viewBox="0 0 8 8"><path d="M1 6.500h5.500V1z" fill="#bbb" stroke="#888" /></svg>
        </footer>
    </div>

    <svg class="defs" width="0" height="0">
        <defs>
            <g id="rail"><path d="M2 17.500h20" stroke="#666" stroke-width="2.500" /><path d="M2 17h20" stroke="#bbb" /><path d="M9.500 14.500h5v5h-5z" fill="#fff" stroke="#666" /></g>
            <g id="pair-top"><path d="M1 3.500h6M17 3.500h6" stroke="#999" stroke-width="2" /><path d="M5.500 1.500h4v4h-4zM14.500 1.500h4v4h-4z" fill="#f4f4f4" stroke="#888" /></g>
            <g id="drop"><path d="M7.500 8.500l3 1 1.500-2 1.500 2 3-1v2L12 15l-4.500-4.500z" fill="#ffc98a" stroke="#dd7a1c" /></g>
        </defs>
    </svg>

    <script>
        const colors = [
            '#000000', '#1a1a1a', '#333333', '#4d4d4d', '#666666', '#808080', '#999999', '#b3b3b3', '#cccccc',
            '#e6e6e6', '#ececec', '#f2f2f2', '#f9f9f9', '#ffffff',
            '#800000', '#ff0000', '#808000', '#ffff00', '#008000', '#00ff00', '#008080', '#00ffff',
            '#000080', '#0000ff', '#800080', '#ff00ff',
            '#2b0000', '#550000', '#800000', '#aa0000', '#d40000', '#ff0000', '#ff2a2a', '#ff5555',
            '#ff8080', '#ffaaaa', '#ffd5d5',
            '#280b0b', '#501616', '#782121', '#a02c2c', '#c83737', '#d35f5f', '#de8787'
        ];
        const palette = document.getElementById('palette');

        colors.forEach(color => {
            const swatch = document.createElement('button');
            swatch.className = 'swatch';
            swatch.style.background = color;
            swatch.setAttribute('aria-label', color);
            palette.appendChild(swatch);
        });
    </script>
</body>

</html>
```

FILE: styles.css
```css
* {
    box-sizing: border-box;
}

body {
    margin: 0;
    color: #454545;
    font: 13px/16px "DejaVu Sans", Verdana, sans-serif;
}

button, input, select {
    margin: 0;
    padding: 0;
    border: 0;
    border-radius: 0;
    background: none;
    color: inherit;
    font: inherit;
}

svg {
    display: block;
    flex: none;
}

.window {
    display: flex;
    flex-direction: column;
    height: 100vh;
    border: 1px solid #4a90dc;
    border-top: 0;
    border-radius: 4px 4px 0 0;
    background: #cdcdcd;
    overflow: hidden;
}

/* title bar */
.titlebar {
    display: flex;
    flex: none;
    align-items: center;
    height: 22px;
    padding: 0 8px 0 4px;
    background: #3b8fe8;
    border-top: 1px solid #5a8fc8;
}

.title {
    flex: 1;
    margin: 0;
    padding: 3px 6px 0 0;
    color: #fff;
    font-size: 12px;
    line-height: 16px;
    text-align: center;
    text-shadow: 1px 1px 1px #1c4f8c;
}

.window-buttons {
    display: flex;
    gap: 6px;
    padding-top: 2px;
}

.win-btn svg {
    fill: none;
    stroke: #fff;
    stroke-width: 2;
    filter: drop-shadow(0 1px 0 #1c4f8c);
}

/* menus */
.menubar {
    display: flex;
    flex: none;
    height: 21px;
    padding-left: 1px;
}

.menu-title {
    height: 21px;
    padding: 0 8px;
}

.menu-title.active {
    background: linear-gradient(#4a9af0, #2f7fd6);
    color: #fff;
}

.menu-open {
    position: relative;
}

.menu {
    position: absolute;
    z-index: 10;
    top: 100%;
    left: 0;
    width: 269px;
    padding: 2px 0;
    border: 1px solid #a0a0a0;
    background: #f3f3f3;
}

.menu hr {
    height: 1px;
    margin: 3px 2px;
    border: 0;
    background: #cfcfcf;
}

.item {
    position: relative;
    display: flex;
    align-items: center;
    width: 100%;
    height: 23px;
    padding: 0 2px;
    text-align: left;
}

.item .icon {
    width: 16px;
    height: 16px;
    margin-right: 5px;
}

.item kbd {
    margin-left: auto;
    font: inherit;
}

.item.selected {
    background: linear-gradient(#5ba3f0, #3a85da);
    box-shadow: inset 0 1px #2f74c4, inset 0 -1px #2f6cb4;
    color: #fff;
}

.pointer {
    position: absolute;
    top: 9px;
    left: 170px;
}

.cut-line {
    fill: none;
    stroke: #d22;
    stroke-dasharray: 1 1;
}

/* toolbars */
.toolbar {
    display: flex;
    flex: none;
    align-items: center;
    height: 36px;
    padding: 0 6px 0 3px;
    border-bottom: 1px solid #979797;
    background: linear-gradient(#cdcdcd, #b7b7b7);
}

.grip {
    width: 4px;
    height: 8px;
    margin-right: 4px;
    background: repeating-linear-gradient(#888 0 1px, #ddd 1px 2px, transparent 2px 3px);
}

.tool {
    display: flex;
    align-items: center;
    justify-content: center;
    width: 34px;
    height: 30px;
}

.node-bar .tool {
    width: 32px;
}

.sep {
    flex: none;
    width: 2px;
    height: 22px;
    margin: 0 5px;
    border-left: 1px solid #b0b0b0;
    border-right: 1px solid #dcdcdc;
}

.spacer {
    flex: 1;
}

.more, .expander {
    color: #666;
    font-size: 8px;
    line-height: 12px;
}

.more {
    width: 16px;
    margin-left: 10px;
}

.coord-label {
    padding: 0 6px 0 8px;
    color: #999;
    font-size: 11px;
}

.coord {
    width: 64px;
    margin-right: 72px;
}

/* spin buttons */
.spin {
    display: flex;
    height: 25px;
    border: 1px solid #8a8a8a;
    border-radius: 3px;
    background: #fcfcfc;
    color: #222;
}

.spin input {
    flex: 1;
    width: 0;
    min-width: 0;
    padding-left: 3px;
}

.steps {
    display: flex;
    flex-direction: column;
    justify-content: center;
    gap: 3px;
    width: 14px;
    border-left: 1px solid #9a9a9a;
    border-radius: 0 3px 3px 0;
    background: linear-gradient(#e2e2e2, #c6c6c6);
}

.steps button {
    align-self: center;
    border: 3px solid transparent;
    border-top: 0;
    border-bottom: 4px solid #555;
}

.steps button:last-child {
    border-top: 4px solid #555;
    border-bottom: 0;
}

.spin.small {
    height: 21px;
    font-size: 11px;
}

.spin.disabled {
    background: #cbcbcb;
    color: #909090;
}

.disabled .steps {
    background: none;
}

.disabled .steps button, .bottom-only .steps button:first-child {
    border-bottom-color: #aaa;
}

.disabled .steps button:last-child, .top-only .steps button:last-child {
    border-top-color: #aaa;
}

.spin.focused {
    border-color: #3f74ae;
}

select {
    appearance: none;
    height: 25px;
    padding: 0 6px;
    border: 1px solid #999;
    border-radius: 3px;
    background: url("data:image/svg+xml,%3Csvg xmlns='http://www.w3.org/2000/svg' width='20' height='16'%3E%3Cpath d='M.5 0v16' stroke='%23aaa'/%3E%3Cpath d='M7 6l3-4 3 4zM7 10l3 4 3-4z' fill='%23555'/%3E%3C/svg%3E") right center no-repeat, linear-gradient(#dedede, #c9c9c9);
    font-size: 11px;
}

/* main area */
.work {
    display: flex;
    flex: 1;
    min-height: 0;
}

.grip-h {
    flex: none;
    align-self: center;
    width: 8px;
    height: 4px;
    background: repeating-linear-gradient(90deg, #888 0 1px, #ddd 1px 2px, transparent 2px 3px);
}

.toolbox {
    display: flex;
    flex: none;
    flex-direction: column;
    width: 37px;
    padding: 3px 4px 8px 2px;
}

.tools {
    display: flex;
    flex: 1;
    flex-direction: column;
    justify-content: space-between;
    padding: 5px 0 20px;
}

.tools button {
    display: flex;
    align-items: center;
    justify-content: center;
    width: 30px;
    height: 30px;
    border: 1px solid transparent;
}

.tools svg {
    width: 23px;
    height: 23px;
}

.tools .pressed, .snap.pressed {
    border: 1px solid #808080;
    border-radius: 3px;
    background: #b5b5b5;
}

.expander {
    flex: none;
}

.canvas-area {
    display: grid;
    flex: 1;
    grid-template-columns: 12px 1fr 28px;
    grid-template-rows: 16px 1fr 20px;
    min-width: 0;
}

.ruler-top, .ruler-left, .canvas {
    width: 100%;
    height: 100%;
    overflow: hidden;
}

.ruler-top {
    grid-column: 2;
}

.ruler-left {
    grid-column: 1;
    grid-row: 2;
}

.ruler-top text, .ruler-left text {
    fill: #666;
    font-size: 9px;
}

.ticks {
    stroke: #444;
    shape-rendering: crispEdges;
}

.canvas {
    border-right: 1px solid #555;
    background: #fff;
}

.scroll {
    border-radius: 7px;
    background: linear-gradient(#ededed, #fff);
}

.scroll.vertical {
    grid-row: 1 / 3;
    grid-column: 3;
    width: 15px;
    margin: 16px 0 0 4px;
    background: linear-gradient(90deg, #ededed, #fff);
}

.scroll.horizontal {
    grid-column: 2;
    height: 15px;
    margin-top: 2px;
    padding: 3px 0 0 36%;
}

.thumb {
    display: block;
    width: 72px;
    height: 9px;
    border: 1px solid #8e8e8e;
    border-radius: 5px;
    background: #d6d6d6;
}

.cms {
    align-self: center;
    margin-left: 6px;
}

/* fill and stroke dialog */
.dock {
    display: flex;
    flex: none;
    flex-direction: column;
    width: 363px;
    padding: 3px 6px 0 4px;
    border-left: 1px solid #b2b2b2;
    border-right: 1px solid #b2b2b2;
    border-bottom: 1px solid #b2b2b2;
}

.dock-head {
    display: flex;
    align-items: center;
    gap: 10px;
    height: 22px;
    margin-right: 2px;
    padding: 3px 3px 0 22px;
    background: #909090;
}

.dock-head h2 {
    flex: 1;
    margin: 0;
    font-size: 13px;
    font-weight: normal;
    color: #3a3a3a;
}

.dock-body {
    display: flex;
    flex-direction: column;
    margin: 3px 0;
    padding: 7px 5px 8px 8px;
    border: 1px solid #b8b8b8;
}

.tabs {
    display: flex;
    justify-content: flex-end;
    padding-right: 82px;
}

.tab {
    display: flex;
    align-items: center;
    height: 28px;
    padding: 0 6px;
    margin-bottom: -1px;
    border: 1px solid #a8a8a8;
    border-bottom: 0;
    border-radius: 3px 3px 0 0;
    background: #d9d9d9;
}

.page {
    display: flex;
    flex-direction: column;
    gap: 6px;
    padding: 9px 8px 26px;
    border: 1px solid #a8a8a8;
    background: #d9d9d9;
}

.row {
    display: flex;
    align-items: center;
    gap: 7px;
}

.row > :first-child {
    width: 91px;
}

.row.dashes {
    gap: 2px;
}

.row.dashes > :first-child {
    width: 96px;
}

.width {
    width: 89px;
}

.unit {
    width: 52px;
}

.miter {
    width: 74px;
}

.dash {
    width: 116px;
    background: url("data:image/svg+xml,%3Csvg xmlns='http://www.w3.org/2000/svg' width='120' height='20'%3E%3Cpath d='M0 0h97v20H0z' fill='white'/%3E%3Cpath d='M0 10h93' stroke='black' stroke-width='2'/%3E%3Cpath d='M100.500 2v16' stroke='%23aaa'/%3E%3Cpath d='M107 8l3-4 3 4zM107 12l3 4 3-4z' fill='%23555'/%3E%3C/svg%3E") right center no-repeat, linear-gradient(#dedede, #c9c9c9);
}

.offset {
    width: 64px;
}

.marker {
    flex: 1;
    height: 30px;
}

.shape {
    display: flex;
    align-items: center;
    justify-content: center;
    width: 32px;
    height: 32px;
    border: 1px solid #999;
    border-radius: 3px;
    background: linear-gradient(#e0e0e0, #cdcdcd);
}

.shape svg {
    width: 24px;
    height: 24px;
}

.dots {
    fill: none;
    stroke: #fff;
    stroke-width: 2;
    stroke-dasharray: 2 2;
}

.slider-row {
    display: flex;
    align-items: center;
    gap: 5px;
}

.slider-row.blur {
    margin-top: 20px;
    gap: 1px;
}

.opacity-label {
    margin: 5px 0 2px 1px;
}

.slider {
    appearance: none;
    flex: 1;
    height: 6px;
    margin-left: 2px;
    padding-right: 4px;
    border: 1px solid #8a8a8a;
    border-radius: 3px;
    background: linear-gradient(90deg, #2d82dc 97%, #b0b0b0 97%);
    box-shadow: inset 0 1px #1d5796;
}

.slider.empty {
    background: #b0b0b0;
    box-shadow: none;
}

.slider::-webkit-slider-thumb {
    appearance: none;
    width: 13px;
    height: 13px;
    border: 1px solid #888;
    border-radius: 50%;
    background: #fdfdfd;
}

.level {
    width: 64px;
}

/* snap bar */
.snapbar {
    display: flex;
    flex: none;
    flex-direction: column;
    align-items: center;
    gap: 2px;
    width: 31px;
    padding: 3px 1px 0 2px;
}

.snapbar .grip-h {
    margin-bottom: 3px;
}

.snapbar hr {
    width: 18px;
    height: 2px;
    margin: 4px 0;
    border: 0;
    border-top: 1px solid #b4b4b4;
    border-bottom: 1px solid #e4e4e4;
}

.snapbar .expander {
    margin-top: 7px;
}

.snap {
    display: flex;
    align-items: center;
    justify-content: center;
    width: 26px;
    height: 26px;
}

.snap svg {
    width: 18px;
    height: 18px;
}

.snap.off {
    opacity: .45;
}

.dash-line {
    fill: none;
    stroke: #333;
    stroke-width: 1;
    stroke-dasharray: 3 1;
}

.curve {
    fill: none;
    stroke: #777;
    stroke-width: 2;
}

.blue {
    fill: #ccf;
    stroke: #22e;
    stroke-width: 2;
}

.green {
    fill: #9ab;
    stroke: #218a21;
    stroke-width: 2;
}

/* palette */
.palette-row {
    display: flex;
    flex: none;
    align-items: center;
    height: 22px;
}

.palette {
    display: flex;
    flex: 1;
    height: 22px;
    padding: 2px 0 3px 3px;
    border: 1px solid #b0b0b0;
    border-width: 1px 1px 1px 0;
    overflow: hidden;
}

.swatch {
    flex: none;
    width: 16px;
    height: 16px;
}

.palette .swatch:last-child {
    flex: 0 1 5px;
    width: 5px;
}

.palette-row .expander {
    width: 12px;
}

.palette-scroll {
    flex: none;
    height: 15px;
    margin-right: 12px;
    padding: 3px;
    background: linear-gradient(#e9e9e9, #fff);
}

/* status bar */
.statusbar {
    display: flex;
    flex: none;
    align-items: center;
    height: 30px;
    padding: 0 5px 4px 2px;
}

.paint {
    display: grid;
    grid-template-columns: 42px 64px 8px;
    column-gap: 3px;
    font-size: 11px;
    line-height: 13px;
}

.paint em {
    padding-right: 12px;
    text-align: right;
}

.stroke-swatch {
    background: linear-gradient(90deg, transparent 50%, #000 50%), repeating-conic-gradient(#2e2e2e 0 25%, #555 0 50%) 0 0 / 8px 8px;
}

.o-label, .z-label {
    padding: 0 4px;
    font-size: 11px;
}

.master {
    width: 36px;
}

.statusbar .sep {
    margin: 0 3px;
}

.layer-btn {
    width: 19px;
}

.layer {
    width: 91px;
    height: 23px;
    padding: 0 4px;
    font-weight: bold;
    background: url("data:image/svg+xml,%3Csvg xmlns='http://www.w3.org/2000/svg' width='20' height='16'%3E%3Cpath d='M7 6l3-4 3 4zM7 10l3 4 3-4z' fill='%23555'/%3E%3C/svg%3E") right center no-repeat, linear-gradient(#dedede, #c6c6c6);
}

.hint {
    flex: 1;
    margin: 0;
    padding-left: 6px;
    white-space: nowrap;
}

.coords {
    display: grid;
    grid-template-columns: auto auto;
    margin: 0;
    padding: 0 6px 0 3px;
    border-left: 1px solid #b4b4b4;
    font: 11px/13px "DejaVu Sans Mono", monospace;
}

.coords dd {
    margin: 0 0 0 2px;
    text-align: right;
}

.zoom {
    width: 55px;
}

.zoom input {
    padding-left: 11px;
}

.resize {
    align-self: flex-end;
    margin-left: 7px;
}
```
